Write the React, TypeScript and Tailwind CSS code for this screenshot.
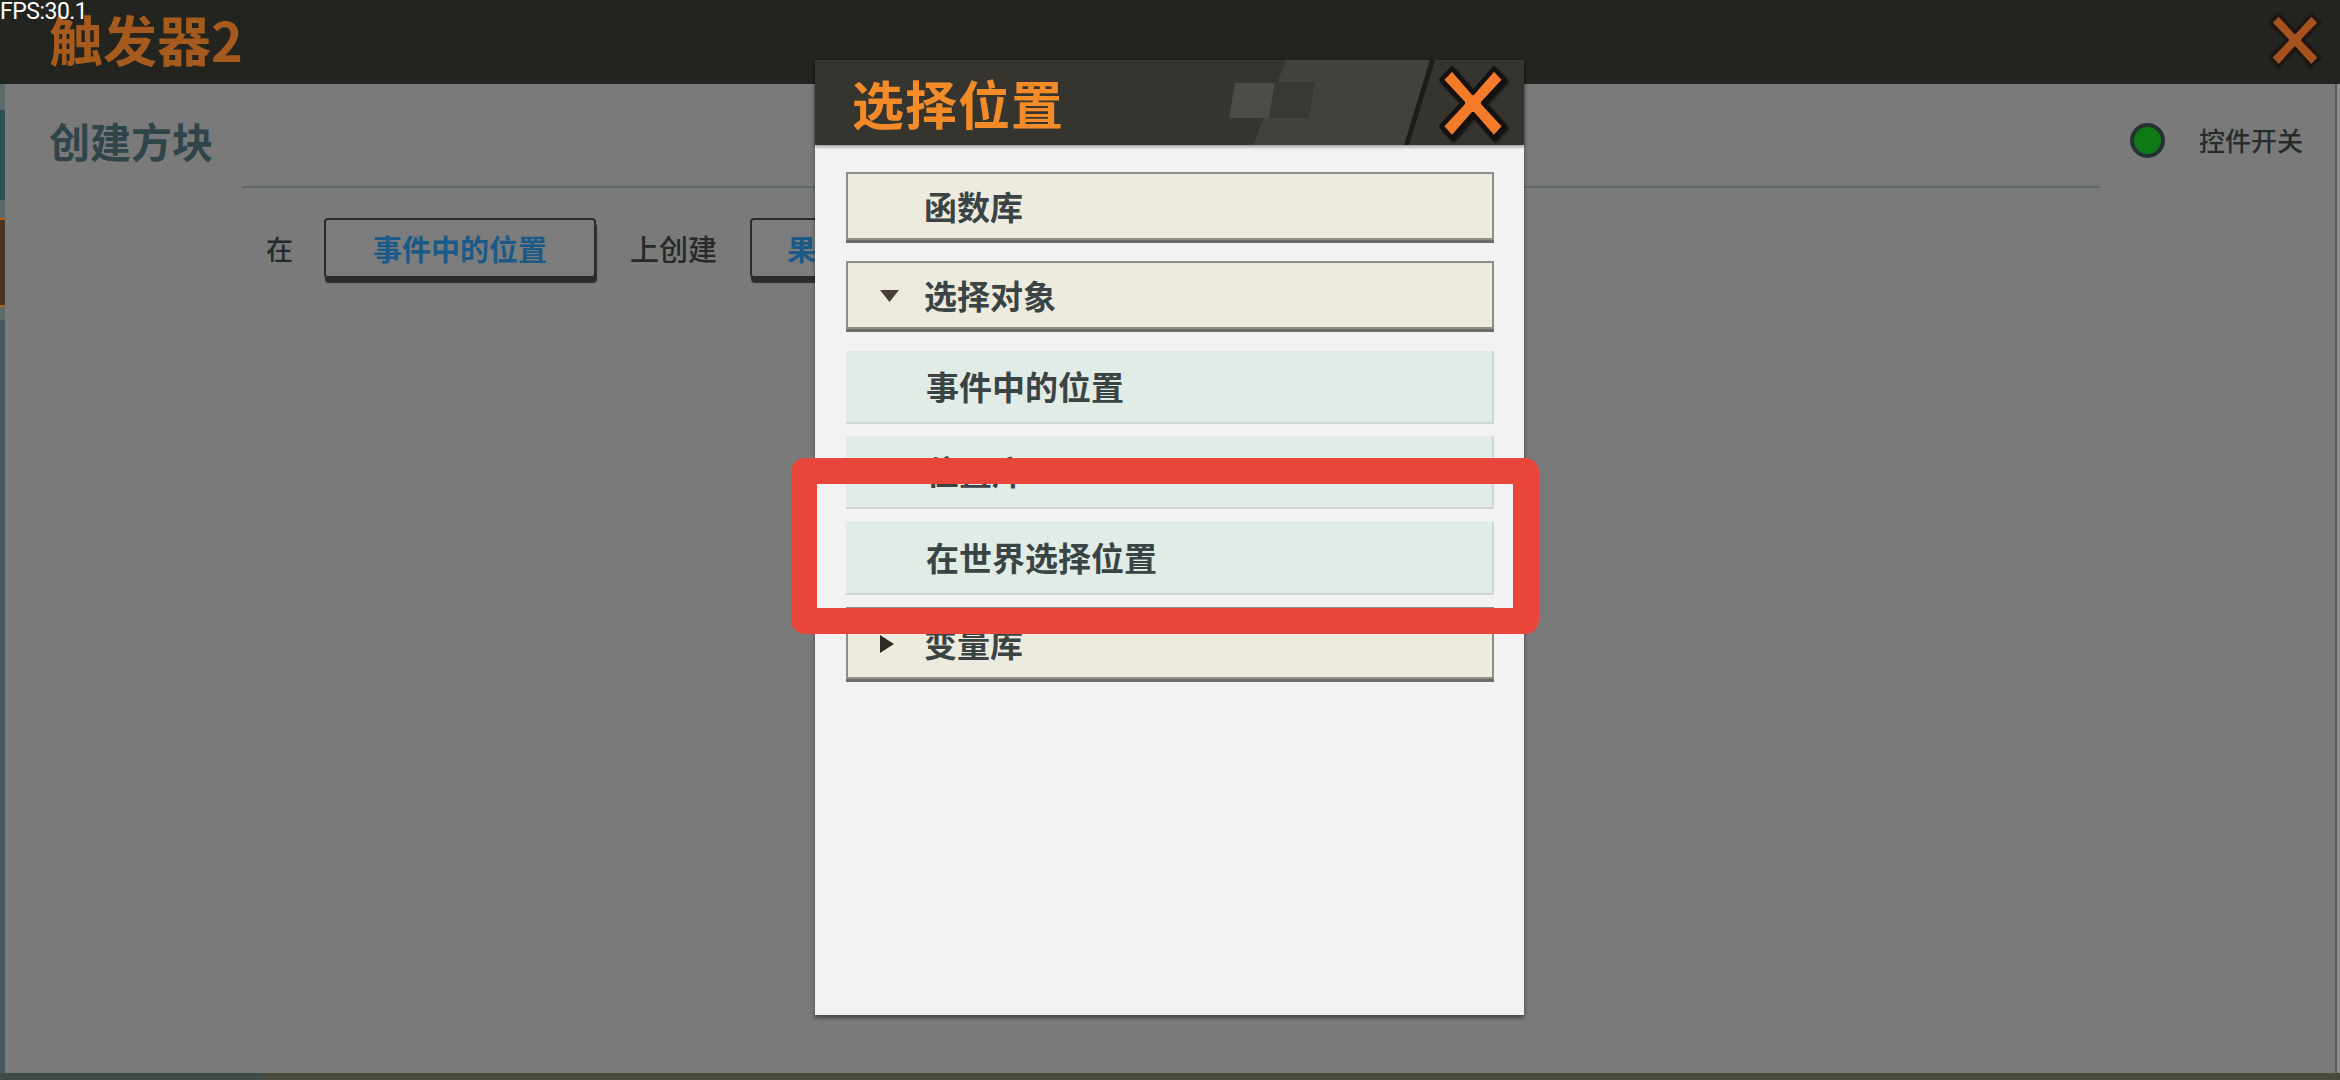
import React from "react";

function XMark({ fill, stroke, className }: { fill: string; stroke: string; className?: string }) {
  return (
    <svg viewBox="0 0 100 100" preserveAspectRatio="none" className={className}>
      <path
        d="M21,7 L50,37 L79,7 L94,21 L64,50 L94,79 L79,94 L50,64 L21,94 L6,79 L36,50 L6,21 Z"
        fill={fill}
        stroke={stroke}
        strokeWidth="6"
        strokeLinejoin="round"
      />
    </svg>
  );
}

function BeigeItem({
  children,
  arrow,
  className,
}: {
  children: React.ReactNode;
  arrow?: "down" | "right";
  className?: string;
}) {
  return (
    <div
      className={
        "relative flex items-center border-2 border-[#8e8e86] bg-[#ecebdd] pl-[76px] shadow-[0_3px_0_#6c6c68] " +
        (className ?? "")
      }
    >
      {arrow === "down" && (
        <svg viewBox="0 0 19 12" className="absolute left-[32px] top-[27px] h-[12px] w-[19px]">
          <polygon points="0,0 19,0 9.5,12" fill="#4a3f38" />
        </svg>
      )}
      {arrow === "right" && (
        <svg viewBox="0 0 14 18" className="absolute left-[32px] top-[26px] h-[18px] w-[14px]">
          <polygon points="0,0 14,9 0,18" fill="#2f2a26" />
        </svg>
      )}
      <span className="text-[33px] font-bold leading-none text-[#3b4444]">{children}</span>
    </div>
  );
}

function MintItem({ children, className }: { children: React.ReactNode; className?: string }) {
  return (
    <div
      className={
        "flex h-[73px] items-center border-r-2 border-b-2 border-[#d0d6d2] bg-[#e2ece6] pl-[80px] " + (className ?? "")
      }
    >
      <span className="text-[33px] font-bold leading-none text-[#3b4444]">{children}</span>
    </div>
  );
}

export default function App() {
  return (
    <div className="relative h-[1080px] w-[2340px] overflow-hidden bg-[#7a7a7a] font-['Noto_Sans_CJK_SC','Noto_Sans',sans-serif]">
      {/* top bar */}
      <div className="flex h-[84px] items-start justify-between bg-[#23231f] pl-[49px] pr-[17px]">
        <div className="mt-[12px] text-[54px] font-bold leading-none text-[#a65a1e]">触发器2</div>
        <XMark fill="#a6521f" stroke="#1e1610" className="mt-[10px] h-[60px] w-[56px]" />
      </div>

      {/* main */}
      <div className="flex h-[989px]">
        <div className="flex w-[5px] flex-col">
          <div className="h-[26px] bg-[#5d6b6b]" />
          <div className="h-[90px] bg-[#2f4e52]" />
          <div className="h-[18px] bg-[#5a6a6a]" />
          <div className="h-[89px] border-y-2 border-[#b0621e] bg-[#4a3422]" />
          <div className="h-[13px] bg-[#5d6b6b]" />
          <div className="flex-1 bg-[#47595a]" />
        </div>

        <div className="flex flex-1 flex-col">
          <div className="mt-[36px] flex h-[40px] items-center justify-between pl-[44px] pr-[32px]">
            <div className="text-[41px] font-bold leading-none text-[#2f4549]">创建方块</div>
            <div className="flex items-center gap-[34px]">
              <div className="h-[35px] w-[35px] rounded-full border-[4px] border-[#253030] bg-[#0e7a16]" />
              <div className="text-[26px] font-medium leading-none text-[#262c2c]">控件开关</div>
            </div>
          </div>

          <div className="ml-[237px] mt-[26px] h-[2px] w-[1858px] bg-[#5f6868]" />

          <div className="ml-[261px] mt-[30px] flex items-center">
            <span className="text-[27px] font-medium leading-none text-[#262a2a]">在</span>
            <div className="ml-[31px] flex h-[60px] w-[272px] items-center justify-center rounded-[4px] border-2 border-[#2b2b2b] bg-[#7c7c7c] shadow-[1px_5px_1px_#2c2c2c]">
              <span className="text-[29px] font-bold leading-none text-[#1b5a88]">事件中的位置</span>
            </div>
            <span className="ml-[34px] text-[29px] font-medium leading-none text-[#262a2a]">上创建</span>
            <div className="ml-[33px] flex h-[60px] w-[272px] items-center justify-start rounded-[4px] border-2 border-[#2b2b2b] bg-[#7c7c7c] pl-[35px] shadow-[1px_5px_1px_#2c2c2c]">
              <span className="text-[29px] font-bold leading-none text-[#1b5a88]">果树方块</span>
            </div>
          </div>
        </div>

        <div className="w-[5px] border-l-2 border-[#5a5a5a] bg-[#8c8c8c]" />
      </div>

      {/* bottom strip */}
      <div className="flex h-[7px]">
        <div className="w-[262px] bg-[#3f4b49]" />
        <div className="flex-1 bg-[#4a4a3c]" />
      </div>

      {/* FPS */}
      <div className="absolute left-0 top-0 font-['Roboto',sans-serif] text-[23px] leading-none tracking-[-0.5px] text-white">
        FPS:30.1
      </div>

      {/* modal */}
      <div className="absolute left-[815px] top-[60px] flex h-[955px] w-[709px] flex-col bg-[#f2f2f2] shadow-[0_3px_4px_rgba(0,0,0,0.45)]">
        <div className="relative flex h-[85px] items-center justify-between bg-[#35342f] pl-[37px] pr-[15px] shadow-[0_2px_3px_rgba(0,0,0,0.35)]">
          <svg viewBox="0 0 709 85" className="absolute inset-0 h-[85px] w-[709px]">
            <polygon points="471,0 617,0 591,85 438,85" fill="#42413b" />
            <polygon points="420,23 460,23 454,58 414,58" fill="#4d4c46" />
            <polygon points="460,22 500,22 494,58 454,58" fill="#393833" />
            <polygon points="615,0 620,0 594,85 589,85" fill="#1c1c19" />
          </svg>
          <div className="relative text-[52px] font-bold leading-none tracking-[1px] text-[#f28b28]">选择位置</div>
          <XMark
            fill="#f47b2a"
            stroke="#141210"
            className="relative h-[80px] w-[72px] drop-shadow-[2px_2px_1px_rgba(0,0,0,0.6)]"
          />
        </div>

        <div className="flex flex-col pl-[31px] pr-[30px] pt-[27px]">
          <BeigeItem className="h-[68px]">函数库</BeigeItem>
          <BeigeItem arrow="down" className="mt-[21px] h-[68px]">
            选择对象
          </BeigeItem>
          <MintItem className="mt-[22px]">事件中的位置</MintItem>
          <MintItem className="mt-[12px]">位置库</MintItem>
          <MintItem className="mt-[13px]">在世界选择位置</MintItem>
          <BeigeItem arrow="right" className="mt-[12px] h-[72px]">
            变量库
          </BeigeItem>
        </div>
      </div>

      {/* red highlight annotation */}
      <div className="absolute left-[791px] top-[458px] h-[176px] w-[748px] rounded-[14px] border-[26px] border-[#e8463a]" />
    </div>
  );
}
